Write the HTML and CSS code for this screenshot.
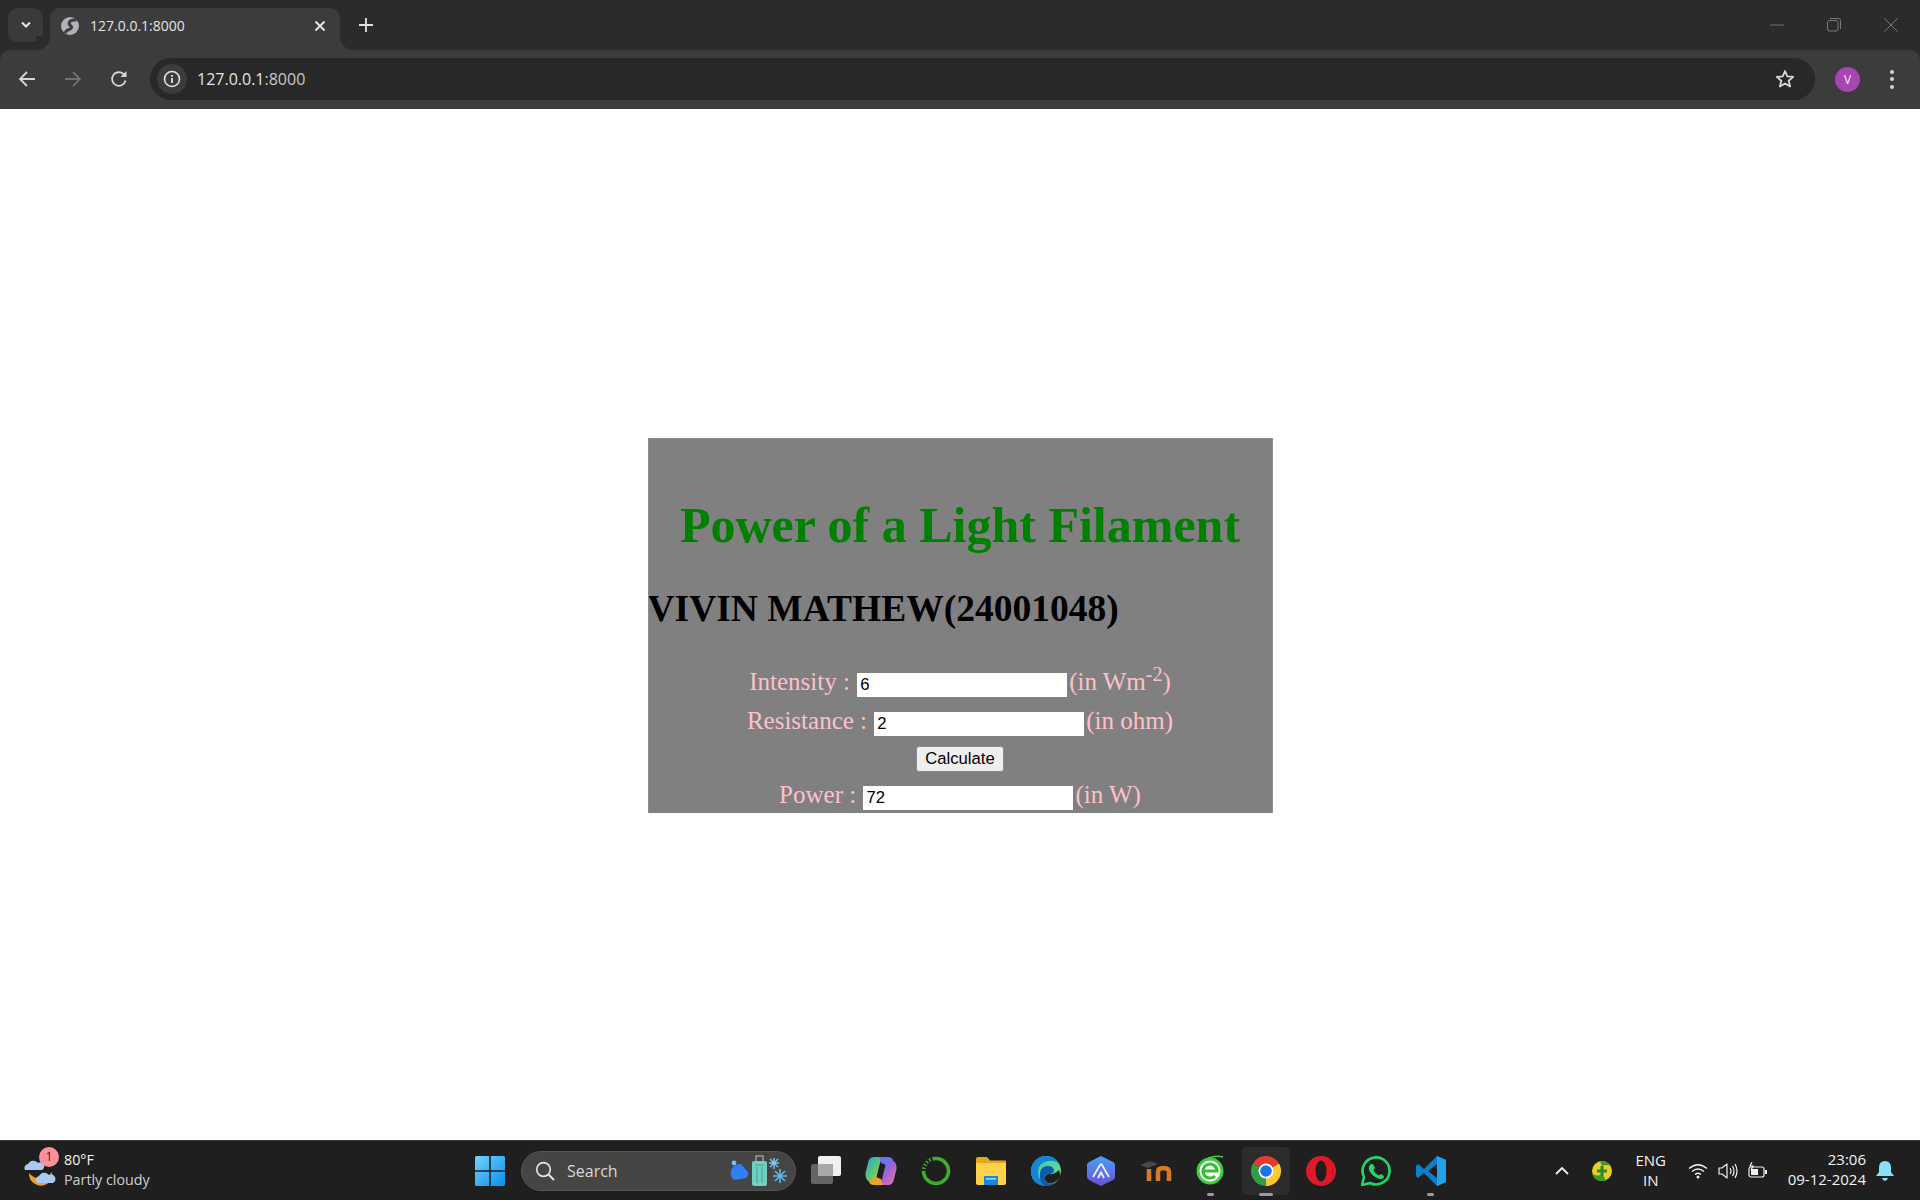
FILE: index.html
```html
<!DOCTYPE html>
<html lang="en">
<head>
    <meta charset="UTF-8">
    <title>Power of a Light Filament</title>
    <link rel="stylesheet" href="styles.css">
</head>
<body>
<div id="screen">

    <div id="tabstrip">
        <div class="tabsearch">
            <svg width="12" height="8" viewBox="0 0 12 8"><path d="M2 1.5 6 5.5 10 1.5" fill="none" stroke="#e6e6e6" stroke-width="2"/></svg>
        </div>
        <div class="tab">
            <svg class="favicon" width="18" height="18" viewBox="0 0 18 18"><circle cx="9" cy="9" r="9" fill="#aeb1b5"/><path d="M15.500 3Q10 2.500 8.500 5 7.500 7.500 10 9 12 11 8 12.500 5 13.500 4 16" fill="none" stroke="#3c3c3c" stroke-width="3"/></svg>
            <span class="tabtitle">127.0.0.1:8000</span>
            <svg class="tabclose" width="12" height="12" viewBox="0 0 12 12"><path d="M1.5 1.5 10.5 10.5M10.5 1.5 1.5 10.5" stroke="#e8e8e8" stroke-width="1.8"/></svg>
        </div>
        <svg class="newtab" width="14" height="14" viewBox="0 0 14 14"><path d="M7 0V14M0 7H14" stroke="#e0e0e0" stroke-width="1.8"/></svg>
        <div class="winbuttons">
            <svg width="14" height="14" viewBox="0 0 14 14"><path d="M0 7H14" stroke="#6e6e6e" stroke-width="1"/></svg>
            <svg width="14" height="14" viewBox="0 0 14 14"><rect x=".5" y="2.5" width="10.5" height="10.5" rx="2" fill="none" stroke="#7a7a7a"/><path d="M3 .5H11.5A2 2 0 0 1 13.5 2.5V11" fill="none" stroke="#7a7a7a"/></svg>
            <svg width="14" height="14" viewBox="0 0 14 14"><path d="M.5.5 13.5 13.5M13.5.5 .5 13.5" stroke="#7a7a7a"/></svg>
        </div>
    </div>

    <div id="toolbar">
        <div class="navbuttons">
            <svg width="18" height="18" viewBox="0 0 18 18"><path d="M17 9H2M9 2 2 9 9 16" fill="none" stroke="#d6d6d6" stroke-width="1.8"/></svg>
            <svg width="18" height="18" viewBox="0 0 18 18"><path d="M1 9H16M9 2 16 9 9 16" fill="none" stroke="#6f6f6f" stroke-width="1.8"/></svg>
            <svg width="18" height="18" viewBox="0 0 18 18"><path d="M15.5 10.5A6.8 6.8 0 1 1 13.5 4L15.5 6" fill="none" stroke="#d6d6d6" stroke-width="1.8"/><path d="M16.5 1V7H10.5Z" fill="#d6d6d6"/></svg>
        </div>
        <div class="urlbar">
            <div class="siteinfo">
                <svg width="18" height="18" viewBox="0 0 18 18"><circle cx="9" cy="9" r="7.5" fill="none" stroke="#e6e6e6" stroke-width="1.6"/><path d="M9 8V13M9 5V6.7" stroke="#e6e6e6" stroke-width="1.8"/></svg>
            </div>
            <span class="urltext">127.0.0.1<span class="urlport">:8000</span></span>
            <svg class="star" width="20" height="20" viewBox="0 0 20 20"><path d="M10 2 12.3 7.4 18.2 7.9 13.7 11.8 15.1 17.5 10 14.5 4.9 17.5 6.3 11.8 1.8 7.9 7.7 7.4Z" fill="none" stroke="#d8d8d8" stroke-width="1.8" stroke-linejoin="round"/></svg>
        </div>
        <div class="avatar">V</div>
        <div class="menudots"><i></i><i></i><i></i></div>
    </div>

    <div id="content">
        <div id="filament">
            <h1>Power of a Light Filament</h1>
            <h2>VIVIN MATHEW(24001048)</h2>
            <form>
                <div class="row">Intensity : <input type="text" value="6"><span>(in Wm<sup>-2</sup>)</span></div>
                <div class="row">Resistance : <input type="text" value="2"><span>(in ohm)</span></div>
                <div class="row row-btn"><button type="button">Calculate</button></div>
                <div class="row">Power : <input type="text" value="72"><span>(in W)</span></div>
            </form>
        </div>
    </div>

    <div id="taskbar">
        <div class="weather">
            <svg width="34" height="34" viewBox="0 0 34 34">
                <path d="M6 19A12 12 0 0 0 24 30 12 12 0 0 0 29 18 14 14 0 0 1 6 19Z" fill="#f0a020"/>
                <path d="M2 16A4 4 0 0 1 5 10 6 6 0 0 1 15 9 4 4 0 0 1 19 16Z" fill="#a9c8f2"/>
                <path d="M14 29A4 4 0 0 1 16 22 6 6 0 0 1 26 21 4 4 0 0 1 30 29Z" fill="#a9c8f2"/>
            </svg>
            <div class="badge">1</div>
            <div class="weathertext">
                <div class="temp">80°F</div>
                <div class="sky">Partly cloudy</div>
            </div>
        </div>

        <div class="apps">
            <div class="app">
                <svg width="30" height="30" viewBox="0 0 30 30">
                    <defs><linearGradient id="startg" x1="0" y1="0" x2="1" y2="1"><stop offset="0" stop-color="#6ed3fb"/><stop offset="1" stop-color="#0a8ef0"/></linearGradient></defs>
                    <path d="M1.500 0H14.200V14.200H0V1.500Q0 0 1.500 0ZM15.800 0H28.500Q30 0 30 1.500V14.200H15.800ZM0 15.800H14.200V30H1.500Q0 30 0 28.500ZM15.800 15.800H30V28.500Q30 30 28.500 30H15.800Z" fill="url(#startg)"/>
                </svg>
            </div>
            <div class="searchbox">
                <svg width="20" height="20" viewBox="0 0 20 20"><circle cx="8.5" cy="8.5" r="6.8" fill="none" stroke="#e4e4e4" stroke-width="1.7"/><path d="M13.5 13.5 19 19" stroke="#e4e4e4" stroke-width="2"/></svg>
                <span>Search</span>
                <svg class="searchart" width="58" height="32" viewBox="0 0 58 32">
                    <path d="M1 20A9 9 0 0 1 11 9L18 17Q19 21 16 23L5 25Q1 24 1 20Z" fill="#2e7ff0"/>
                    <circle cx="4" cy="8" r="2.4" fill="#7ab8ff"/>
                    <rect x="22" y="6" width="15" height="25" rx="2" fill="#6fd0c2"/>
                    <path d="M26 6V1H33V6" fill="none" stroke="#9a9aa0" stroke-width="1.5"/>
                    <path d="M25 10H34M27 12V28M32 12V28" stroke="#3e9f95" stroke-width="1"/>
                    <path d="M44 3 44 14M39 8 49 8M40 4 48 12M48 4 40 12" stroke="#7fc4f4" stroke-width="1.4"/>
                    <path d="M50 14 50 28M43 21 57 21M45 16 55 26M55 16 45 26" stroke="#5cb6f2" stroke-width="1.6"/>
                </svg>
            </div>
            <div class="app">
                <svg width="30" height="30" viewBox="0 0 30 30"><rect x="7" y="0" width="23" height="20" rx="2" fill="#f0f0f0"/><rect x="0" y="8" width="22" height="20" rx="2" fill="#6a6a6a" fill-opacity=".92"/><rect x="7" y="8" width="15" height="12" fill="#a8a8a8"/></svg>
            </div>
            <div class="app">
                <svg width="32" height="30" viewBox="0 0 32 30">
                    <defs>
                        <linearGradient id="copa" x1="0" y1="0" x2="1" y2="1"><stop offset="0" stop-color="#1fa8e8"/><stop offset=".5" stop-color="#5fc66a"/><stop offset="1" stop-color="#ffc42e"/></linearGradient>
                        <linearGradient id="copb" x1="0" y1="0" x2="1" y2="1"><stop offset="0" stop-color="#3e7cf0"/><stop offset=".5" stop-color="#a560d8"/><stop offset="1" stop-color="#f07a98"/></linearGradient>
                    </defs>
                    <path d="M9 1H19Q16 2 15 7L11.5 21Q10 27 5 26Q0 24 0.500 17L3 7Q4 1 9 1Z" fill="url(#copa)"/>
                    <path d="M23 29H13Q16 28 17 23L20.500 9Q22 3 27 4Q32 6 31.500 13L29 23Q28 29 23 29Z" fill="url(#copb)"/>
                    <path d="M11 21 16 23 18 29H9Q5 29 4 26Z" fill="#f4a030"/>
                    <path d="M21 9 16 7 14 1H23Q27 1 28 4Z" fill="#6a74ee"/>
                </svg>
            </div>
            <div class="app">
                <svg width="30" height="30" viewBox="0 0 30 30"><circle cx="15" cy="15" r="12.500" fill="none" stroke="#3fae2a" stroke-width="3.600"/><path d="M2.500 15A12.500 12.500 0 0 1 12 3" fill="none" stroke="#1f1e1e" stroke-width="3.800" stroke-dasharray="2 1.500"/></svg>
            </div>
            <div class="app">
                <svg width="30" height="28" viewBox="0 0 30 28"><path d="M0 2Q0 0 2 0H11L14 3.500H30V9H0Z" fill="#e4a81c"/><path d="M0 6H30V26Q30 28 28 28H2Q0 28 0 26Z" fill="#fdd149"/><path d="M8 19H22V28H8Z" fill="#1a86d8"/><rect x="10" y="21" width="10" height="1.600" fill="#9fd4f8"/></svg>
            </div>
            <div class="app">
                <svg width="30" height="30" viewBox="0 0 30 30">
                    <defs><linearGradient id="edgea" x1="0" y1="0" x2="1" y2="1"><stop offset="0" stop-color="#2fc3d8"/><stop offset="1" stop-color="#7ee06a"/></linearGradient></defs>
                    <circle cx="15" cy="15" r="15" fill="url(#edgea)"/>
                    <path d="M0 15A15 15 0 0 1 15 0Q24 0 28 8 24 4 17 5 7 7 7 16 7 26 18 29.500 0 31 0 15Z" fill="#1586d6"/>
                    <path d="M9 17Q10 10 17 10 22 10 23 14 23 18 18 18 13 18 14 23 16 30 25 26 19 31 14 30 8 27 9 17Z" fill="#0c5aa8"/>
                    <path d="M18 18Q23 19 28 14 30 18 29 21 25 28 17 27 13 24 14 21 15 18 18 18Z" fill="#1f1e1e"/>
                </svg>
            </div>
            <div class="app">
                <svg width="28" height="30" viewBox="0 0 28 30">
                    <defs><linearGradient id="hexa" x1="0" y1="0" x2="0" y2="1"><stop offset="0" stop-color="#4aa0f5"/><stop offset="1" stop-color="#6a50dc"/></linearGradient></defs>
                    <path d="M14 0 26 6Q28 7 28 9V21Q28 23 26 24L14 30 2 24Q0 23 0 21V9Q0 7 2 6Z" fill="url(#hexa)"/>
                    <path d="M6 21 13 9Q14 7.500 15 9L22 21M11 22 14 16.500 17 22" fill="none" stroke="#eef2ff" stroke-width="1.800"/>
                </svg>
            </div>
            <div class="app">
                <svg width="32" height="22" viewBox="0 0 32 22"><path d="M0 5 10 1 18 4 8 8Z" fill="#4c4844"/><path d="M9 9V21M18 21V12Q18 8 23 8 29 8 29 12V21" fill="none" stroke="#d87a1e" stroke-width="4.500"/></svg>
            </div>
            <div class="app app-on">
                <svg width="30" height="32" viewBox="0 0 30 32"><circle cx="14" cy="16" r="12" fill="#fff" stroke="#3ecf3e" stroke-width="3"/><path d="M8 16H21A7 7 0 1 0 19 21" fill="none" stroke="#30c030" stroke-width="3"/><path d="M12 3Q20 0 27 2" fill="none" stroke="#3ecf3e" stroke-width="1.500"/></svg>
            </div>
            <div class="app app-on app-chrome">
                <svg width="30" height="30" viewBox="0 0 30 30">
                    <path d="M15 15 2 7.500A15 15 0 0 1 28 7.500Z" fill="#e33b2e"/>
                    <path d="M15 15 28 7.500A15 15 0 0 1 15 30Z" fill="#fcc934"/>
                    <path d="M15 15 15 30A15 15 0 0 1 2 7.500Z" fill="#2f9e48"/>
                    <circle cx="15" cy="15" r="7.500" fill="#fff"/>
                    <circle cx="15" cy="15" r="5.800" fill="#1a73e8"/>
                </svg>
            </div>
            <div class="app">
                <svg width="30" height="30" viewBox="0 0 30 30"><circle cx="15" cy="15" r="15" fill="#e01828"/><ellipse cx="15" cy="15" rx="5.500" ry="10.500" fill="#1f1e1e"/><path d="M22 4A15 15 0 0 1 22 26 14 14 0 0 0 22 4Z" fill="#a80e1c"/></svg>
            </div>
            <div class="app">
                <svg width="30" height="30" viewBox="0 0 30 30"><path d="M1 29 3 21A13.500 13.500 0 1 1 9 27Z" fill="none" stroke="#25d366" stroke-width="2.600" stroke-linejoin="round"/><path d="M10 8 12 8 14 12 12.500 14Q14 18 18 19.500L20 18 23 20 22.500 22Q20 24 16 22 10 19 8 14 7 10 10 8Z" fill="#25d366"/></svg>
            </div>
            <div class="app app-on">
                <svg width="30" height="30" viewBox="0 0 30 30"><path d="M21 0 30 4V26L21 30 8 17 2 22 0 20V10L2 8 8 13Z" fill="#0a7fcc"/><path d="M21 0 30 4V26L21 30Z" fill="#22a2ec"/><path d="M21 8V22L12 15Z" fill="#1f1e1e"/></svg>
            </div>
        </div>

        <div class="tray">
            <svg class="traychevron" width="14" height="8" viewBox="0 0 14 8"><path d="M1 7 7 1 13 7" fill="none" stroke="#f0f0f0" stroke-width="1.800"/></svg>
            <svg class="trayshield" width="20" height="20" viewBox="0 0 20 20"><circle cx="10" cy="10" r="10" fill="#e8cf20"/><path d="M0 11Q3 16 8 14 12 13 14 20 6 21 2 17ZM8 0Q16 0 19 5 14 3 10 5Z" fill="#3c9a30"/><path d="M10 5V15M5 10H15" stroke="#2a8a28" stroke-width="3"/></svg>
            <div class="lang"><div>ENG</div><div>IN</div></div>
            <svg class="traywifi" width="20" height="16" viewBox="0 0 20 16"><path d="M1 5.500Q10 -2 19 5.500M4 8.500Q10 3.500 16 8.500M7 11.500Q10 9 13 11.500" fill="none" stroke="#f0f0f0" stroke-width="1.300"/><circle cx="10" cy="14" r="1.500" fill="#f0f0f0"/></svg>
            <svg class="trayvol" width="20" height="18" viewBox="0 0 20 18"><path d="M1 6H4L9 2V16L4 12H1Z" fill="none" stroke="#f0f0f0" stroke-width="1.200" stroke-linejoin="round"/><path d="M12 6Q14 9 12 12M14.500 4Q17.500 9 14.500 14M17 2Q21 9 17 16" fill="none" stroke="#f0f0f0" stroke-width="1.200"/></svg>
            <svg class="traybat" width="20" height="18" viewBox="0 0 20 18"><rect x="1" y="5" width="15" height="10" rx="2" fill="none" stroke="#f0f0f0" stroke-width="1.200"/><rect x="3" y="7" width="7" height="6" fill="#f0f0f0"/><rect x="17" y="8" width="2" height="4" fill="#f0f0f0"/><path d="M4 0 2 4H5L3 8" fill="none" stroke="#f0f0f0" stroke-width="1.200"/></svg>
            <div class="clock"><div>23:06</div><div>09-12-2024</div></div>
            <svg class="traybell" width="18" height="20" viewBox="0 0 18 20"><path d="M9 0Q15 0 15 7V11L18 15H0L3 11V7Q3 0 9 0Z" fill="#86e0fa"/><path d="M6 17H12Q11 20 9 20 7 20 6 17Z" fill="#86e0fa"/></svg>
        </div>
    </div>

</div>
</body>
</html>
```

FILE: styles.css
```css
html, body {
    margin: 0;
    height: 100%;
    overflow: hidden;
}

#screen {
    display: flex;
    flex-direction: column;
    height: 1200px;
    background-color: #2b2b2b;
    font-family: "Open Sans", "Noto Sans", sans-serif;
}

#tabstrip {
    display: flex;
    align-items: flex-end;
    height: 50px;
    background-color: #2b2b2b;
}

.tabsearch {
    display: flex;
    align-items: center;
    justify-content: center;
    width: 35px;
    height: 34px;
    margin: 0 7px 8px 8px;
    background-color: #3a3a3a;
    border-radius: 10px;
}

.tab {
    position: relative;
    display: flex;
    align-items: center;
    width: 290px;
    height: 42px;
    box-sizing: border-box;
    padding: 0 11px 7px 11px;
    background-color: #3c3c3c;
    border-radius: 10px 10px 0 0;
    color: #e3e3e3;
    font-size: 14px;
}

.tab::before,
.tab::after {
    content: "";
    position: absolute;
    bottom: 0;
    width: 14px;
    height: 14px;
}

.tab::before {
    left: -14px;
    background: radial-gradient(circle at 0 0, #2b2b2b 14px, #3c3c3c 14.5px);
}

.tab::after {
    right: -14px;
    background: radial-gradient(circle at 100% 0, #2b2b2b 14px, #3c3c3c 14.5px);
}

.favicon {
    margin-right: 11px;
}

.tabtitle {
    flex: 1;
}

.tabclose {
    margin-right: 3px;
}

.newtab {
    margin: 0 0 18px 19px;
}

.winbuttons {
    display: flex;
    gap: 43px;
    margin: 0 22px 18px auto;
}

#toolbar {
    display: flex;
    align-items: center;
    height: 59px;
    background-color: #3c3c3c;
    border-radius: 10px 10px 0 0;
    box-sizing: border-box;
    padding-bottom: 1px;
}

.navbuttons {
    display: flex;
    gap: 28px;
    padding-left: 18px;
    width: 150px;
    box-sizing: border-box;
}

.urlbar {
    display: flex;
    align-items: center;
    width: 1665px;
    height: 42px;
    background-color: #282828;
    border-radius: 21px;
    color: #e6e6e6;
    font-size: 16px;
}

.siteinfo {
    display: flex;
    align-items: center;
    justify-content: center;
    width: 30px;
    height: 30px;
    margin: 0 10px 0 7px;
    background-color: #3c3c3c;
    border-radius: 50%;
}

.urltext {
    flex: 1;
    padding-bottom: 1px;
}

.urlport {
    color: #c8c8c8;
}

.star {
    margin-right: 20px;
}

.avatar {
    display: flex;
    align-items: center;
    justify-content: center;
    width: 25px;
    height: 25px;
    margin-left: 20px;
    background-color: #a845b5;
    border-radius: 50%;
    color: #f2f2f2;
    font-size: 12px;
}

.menudots {
    display: flex;
    flex-direction: column;
    gap: 3.5px;
    margin-left: 30px;
}

.menudots i {
    display: block;
    width: 4px;
    height: 4px;
    background-color: #d4d4d4;
    border-radius: 50%;
}

#content {
    flex: 1;
    background-color: #fff;
    padding-top: 329px;
}

#filament {
    width: 625px;
    height: 375px;
    margin: 0 auto;
    box-sizing: border-box;
    overflow: hidden;
    background-color: gray;
    border: 1px solid #8c8c8c;
    border-bottom: none;
    font-family: "Liberation Serif", "Times New Roman", serif;
    color: pink;
    text-align: center;
}

#filament h1 {
    margin: 58px 0 0 0;
    font-size: 50px;
    line-height: 57px;
    color: green;
}

#filament h2 {
    margin: 32px 0 0 -1px;
    font-size: 37.5px;
    line-height: 46px;
    color: #000;
    text-align: left;
}

form {
    margin-top: 35px;
    font-size: 25px;
}

.row {
    height: 39px;
    line-height: 30px;
}

.row-btn {
    height: 35px;
    line-height: 22px;
}

.row span {
    margin-left: 1px;
}

.row sup {
    font-size: 20px;
    line-height: 0;
}

.row input {
    width: 212px;
    height: 26px;
    box-sizing: border-box;
    padding: 1px 3px;
    border: 1px solid #808080;
    background-color: #fff;
    color: #000;
    font-family: "Liberation Sans", Arial, sans-serif;
    font-size: 16.67px;
    vertical-align: 0;
}

.row button {
    width: 88px;
    height: 26px;
    padding: 0;
    background-color: #efefef;
    border: 1px solid #8a8a8a;
    border-radius: 3px;
    color: #000;
    font-family: "Liberation Sans", Arial, sans-serif;
    font-size: 16.67px;
}

#taskbar {
    display: grid;
    grid-template-columns: 1fr auto 1fr;
    align-items: center;
    height: 60px;
    box-sizing: border-box;
    background-color: #201f1f;
    border-top: 1px solid #3a3a3a;
    color: #f2f2f2;
}

.weather {
    position: relative;
    display: flex;
    align-items: center;
    padding-left: 23px;
    gap: 7px;
}

.badge {
    position: absolute;
    left: 39px;
    top: -3px;
    width: 20px;
    height: 20px;
    background-color: #ff8f9c;
    border-radius: 50%;
    color: #201f1f;
    font-size: 12px;
    line-height: 20px;
    text-align: center;
}

.weathertext {
    padding-bottom: 2px;
    font-size: 14.3px;
    line-height: 20px;
}

.sky {
    color: #cfcfcf;
}

.apps {
    display: flex;
    align-items: center;
}

.app {
    position: relative;
    display: flex;
    align-items: center;
    justify-content: center;
    width: 55px;
    height: 48px;
}

.app-on::after {
    content: "";
    position: absolute;
    bottom: -1px;
    left: 24px;
    width: 7px;
    height: 3px;
    background-color: #9b9b9b;
    border-radius: 2px;
}

.app-chrome {
    width: 48px;
    margin: 0 3.5px;
    background-color: #2d2c2c;
    border-radius: 5px;
}

.app-chrome::after {
    left: 17px;
    width: 14px;
}

.searchbox {
    display: flex;
    align-items: center;
    width: 275px;
    height: 40px;
    margin: 0 2px 0 4px;
    box-sizing: border-box;
    padding-left: 13px;
    background-color: #454543;
    border: 1px solid #555;
    border-radius: 20px;
    color: #d8d8d8;
    font-size: 16px;
}

.searchbox span {
    flex: 1;
    margin-left: 12px;
}

.searchart {
    margin-right: 7px;
}

.tray {
    display: flex;
    align-items: center;
    justify-content: flex-end;
    font-size: 15px;
}

.traychevron {
    margin-right: 23px;
}

.trayshield {
    margin-right: 19px;
}

.lang {
    width: 40px;
    margin-right: 17px;
    padding-bottom: 2px;
    text-align: center;
    line-height: 20px;
}

.traywifi {
    margin-right: 10px;
}

.trayvol {
    margin-right: 10px;
}

.traybat {
    margin-right: 20px;
}

.clock {
    padding-bottom: 3px;
    line-height: 20px;
    text-align: right;
    margin-right: 10px;
}

.traybell {
    margin-right: 26px;
}
```
